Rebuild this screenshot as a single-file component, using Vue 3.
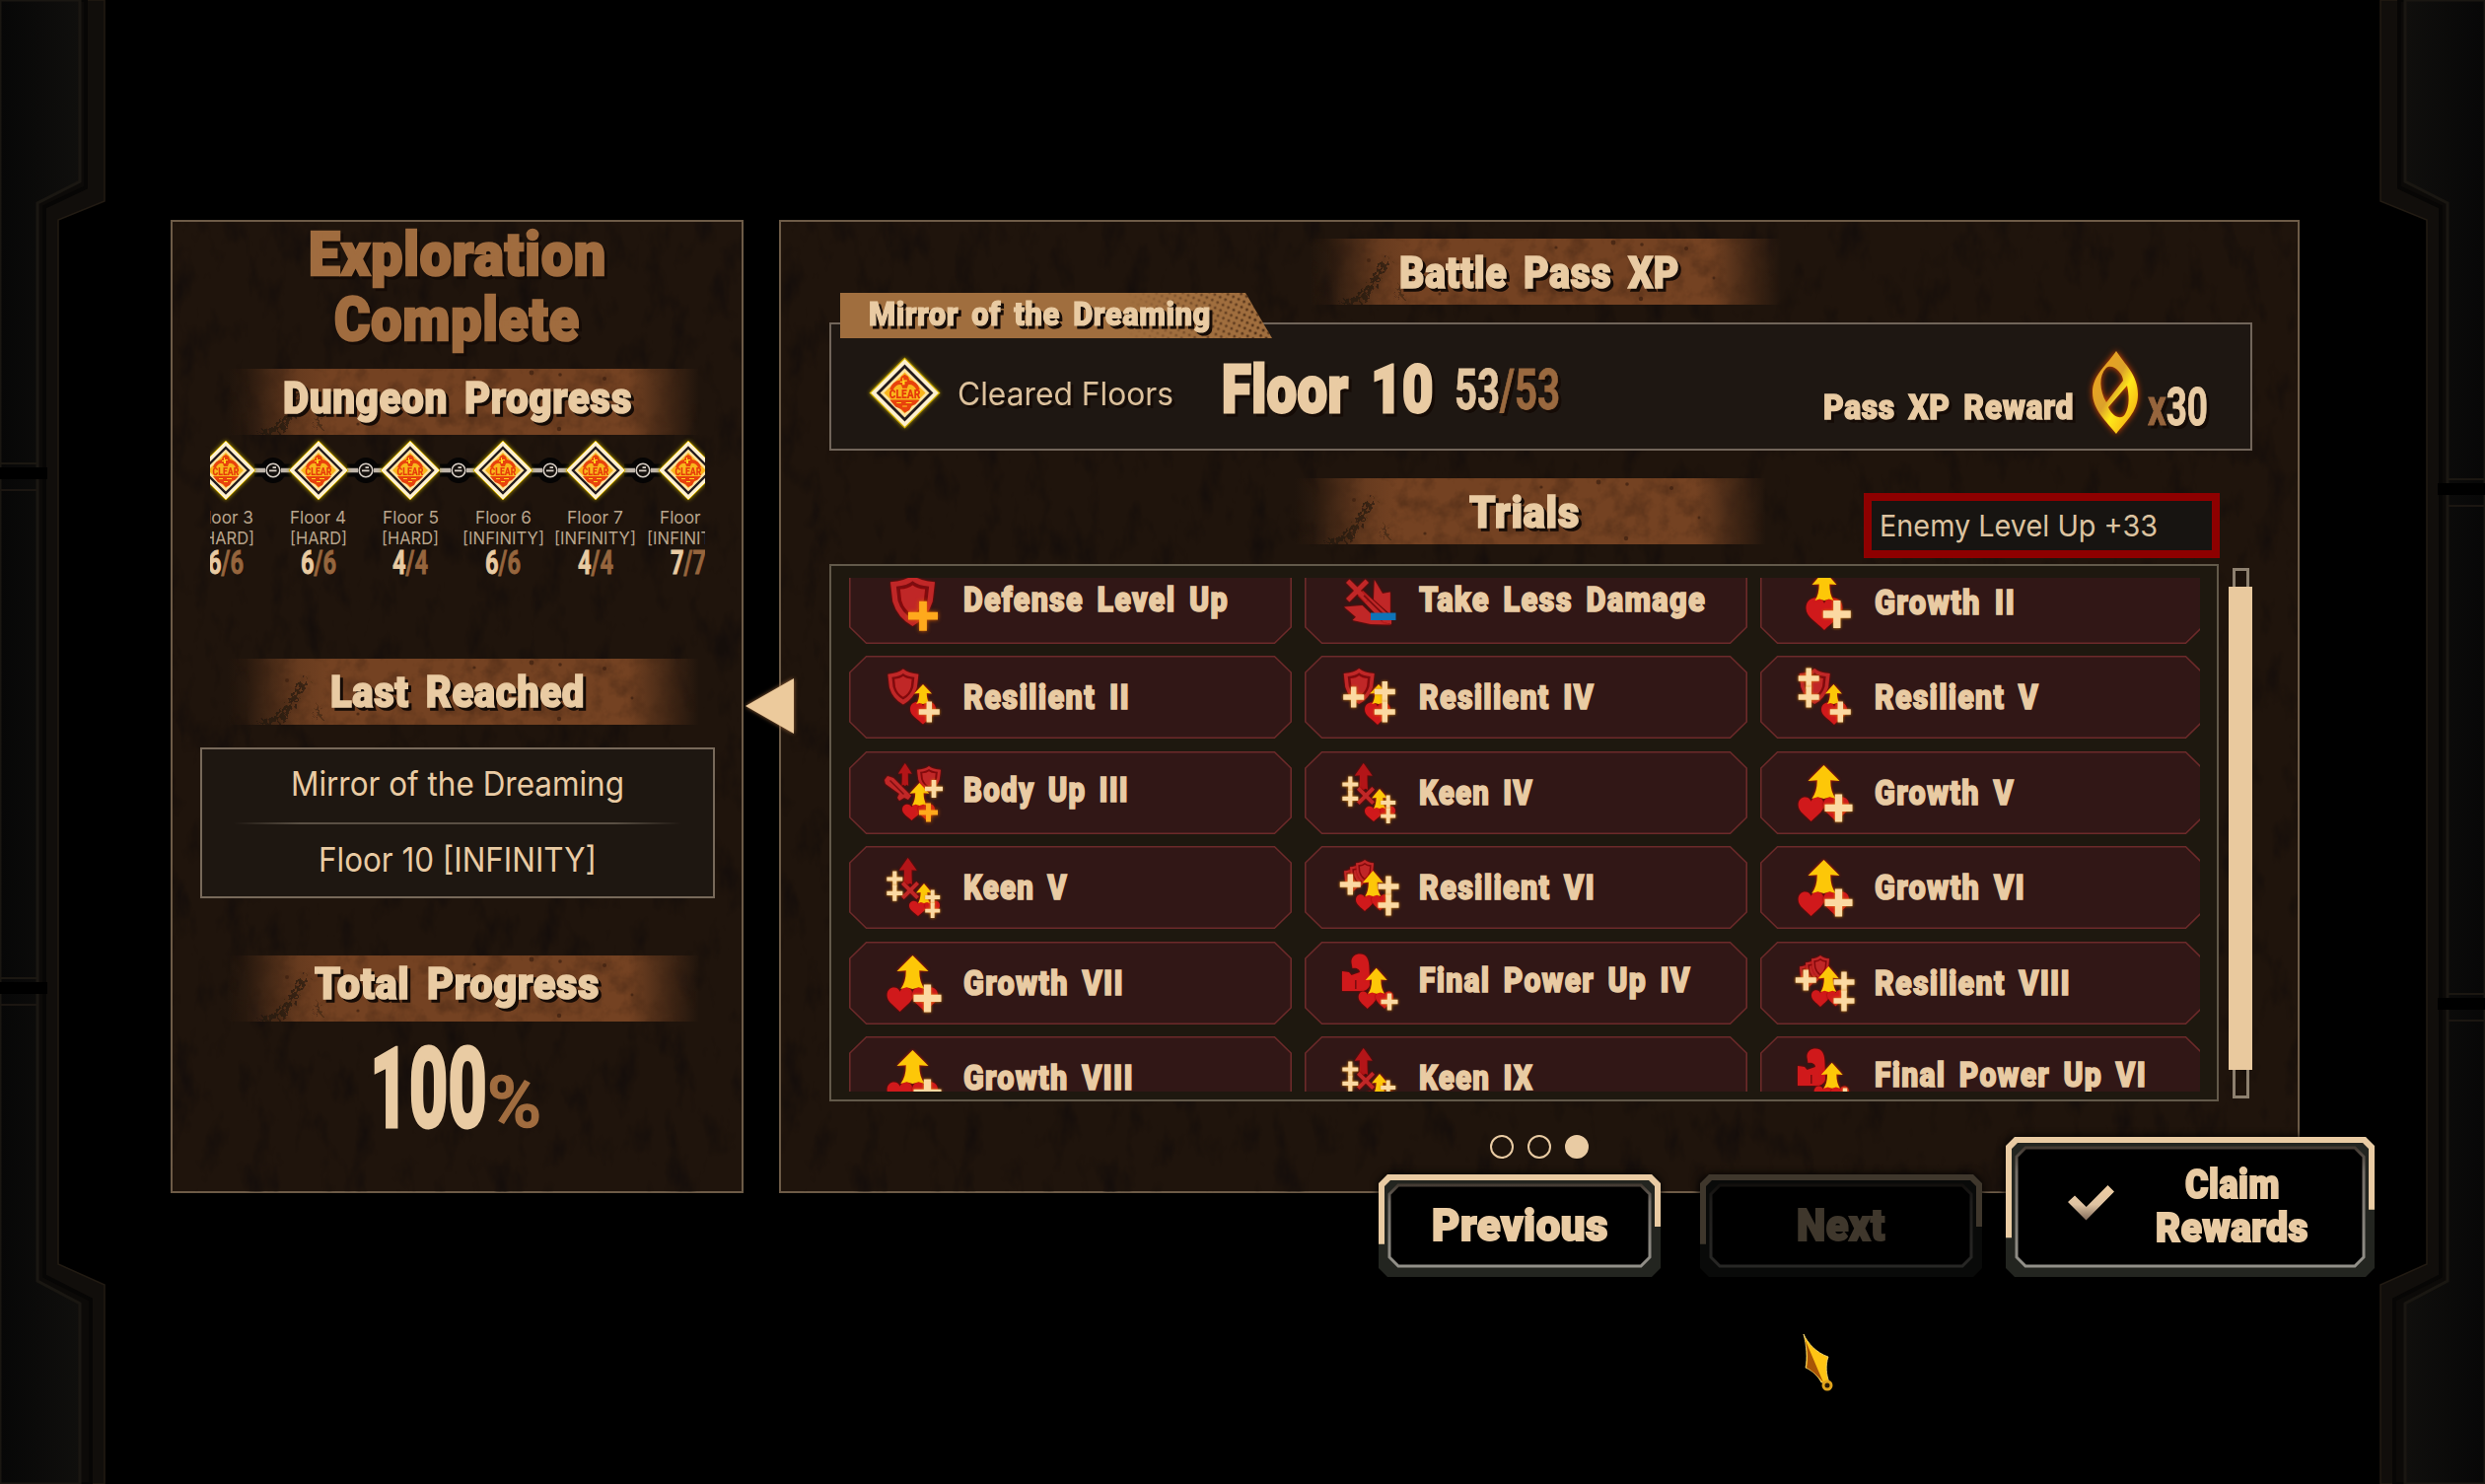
<script setup>
import { h } from 'vue'

const CREAM = '#e9cba3'
const BROWN = '#a06c3f'

/* Text set to an exact width; the box is as tall as the capitals. */
const Fit = (p) => {
  const body = p.face === 'body'
  const size = p.cap / (body ? 0.727 : 0.711)
  const parts = Array.isArray(p.t) ? p.t : [[p.t, p.color || CREAM]]
  return h('svg', { class: 'fit', width: p.w, height: p.cap }, [
    h('text', {
      x: 0, y: p.cap, textLength: p.w, lengthAdjust: 'spacingAndGlyphs',
      'font-family': body ? 'Inter, "Liberation Sans", sans-serif' : 'Roboto, "Liberation Sans", sans-serif',
      'font-size': size,
      'font-weight': p.weight || (body ? 400 : 900),
      'word-spacing': p.ws ?? (body ? 0 : size * 0.16),
      'letter-spacing': p.ls ?? (body ? 0 : 0.6),
      'stroke-linejoin': 'miter',
    }, parts.map(([s, c]) => h('tspan', { fill: c, stroke: c, 'stroke-width': p.stroke ?? (body ? 0 : 1.6) }, s))),
  ])
}
Fit.props = ['t', 'w', 'cap', 'face', 'color', 'weight', 'ws', 'ls', 'stroke']

const Banner = (_, { slots }) => h('div', { class: 'banner' }, [
  h('svg', { class: 'banner-bg', width: 478, height: 67, viewBox: '0 0 478 67' }, [
    h('rect', { width: 478, height: 67, fill: 'url(#bannerFill)' }),
    h('rect', { width: 478, height: 67, filter: 'url(#grain)', mask: 'url(#bannerMask)', opacity: 0.3 }),
    h('path', { d: 'M82 20 L70 30 L62 44 L48 58 L30 67 L46 67 L60 58 L66 46 L76 32 Z', fill: '#1d120b', opacity: 0.6, filter: 'url(#rough)' }),
    h('path', { d: 'M92 46 L86 62 L90 56 L96 62 Z', fill: '#1d120b', opacity: 0.4, filter: 'url(#rough)' }),
    ...[[308, 4, 2.4], [337, 6, 1.8], [382, 10, 2], [336, 61, 2.2], [250, 9, 1.6], [60, 22, 2], [410, 40, 1.4], [132, 56, 1.6]]
      .map(([cx, cy, r]) => h('circle', { cx, cy, r, fill: '#3c2010', opacity: 0.7 })),
  ]),
  h('div', { class: 'banner-text' }, slots.default()),
])

const plus = (cx, cy, r, c = 'cream') => {
  const t = r * 0.26
  return { k: 'plus', c, d: `M${cx - t} ${cy - r}h${2 * t}V${cy - t}H${cx + r}v${2 * t}H${cx + t}V${cy + r}h${-2 * t}V${cy + t}H${cx - r}v${-2 * t}H${cx - t}Z` }
}
const arrow = (cx, y, w, hh, c = 'gold') => {
  const a = w / 2, s = w * 0.21, n = y + hh * 0.47, b = y + hh, f = w * (c === 'gold' ? 0.38 : 0.24)
  return { k: 'arrow', c, d: `M${cx} ${y}L${cx + a} ${n}L${cx + s} ${n - hh * 0.02}Q${cx + s} ${y + hh * 0.8} ${cx + f} ${b}L${cx + f * 0.5} ${b - hh * 0.05}L${cx} ${b}L${cx - f * 0.5} ${b - hh * 0.05}L${cx - f} ${b}Q${cx - s} ${y + hh * 0.8} ${cx - s} ${n - hh * 0.02}L${cx - a} ${n}Z` }
}
const heart = (x, y, w, hh) => {
  const m = x + w / 2
  return { k: 'heart', c: 'red', d: `M${m} ${y + hh}C${m - w * 0.2} ${y + hh * 0.75} ${x} ${y + hh * 0.6} ${x} ${y + hh * 0.3}C${x} ${y - hh * 0.08} ${m - w * 0.08} ${y - hh * 0.12} ${m} ${y + hh * 0.16}C${m + w * 0.08} ${y - hh * 0.12} ${x + w} ${y - hh * 0.08} ${x + w} ${y + hh * 0.3}C${x + w} ${y + hh * 0.6} ${m + w * 0.2} ${y + hh * 0.75} ${m} ${y + hh}Z` }
}
const shieldPath = (x, y, w, hh) => {
  const m = x + w / 2
  return `M${m} ${y}Q${m + w * 0.16} ${y + hh * 0.12} ${x + w} ${y + hh * 0.14}L${x + w * 0.95} ${y + hh * 0.52}Q${x + w * 0.84} ${y + hh * 0.84} ${m} ${y + hh}Q${x + w * 0.16} ${y + hh * 0.84} ${x + w * 0.05} ${y + hh * 0.52}L${x} ${y + hh * 0.14}Q${m - w * 0.16} ${y + hh * 0.12} ${m} ${y}Z`
}
const shield = (x, y, w, hh) => [
  { c: 'rim', d: shieldPath(x, y, w, hh) },
  { c: 'dark', d: shieldPath(x + w * 0.13, y + hh * 0.12, w * 0.74, hh * 0.74) },
  { c: 'rim', d: shieldPath(x + w * 0.22, y + hh * 0.2, w * 0.56, hh * 0.58) },
]
const shields = () => [...shield(6, 18, 18, 24), ...shield(12, 14, 18, 24), ...shield(18, 10, 18, 24)]
const cross = (x, y, s) => ({ c: 'rim', d: `M${x - s} ${y - s * 0.7}l${s * 0.3} ${-s * 0.3}l${s * 0.7} ${s * 0.7}l${s * 0.7} ${-s * 0.7}l${s * 0.3} ${s * 0.3}l${-s * 0.7} ${s * 0.7}l${s * 0.7} ${s * 0.7}l${-s * 0.3} ${s * 0.3}l${-s * 0.7} ${-s * 0.7}l${-s * 0.7} ${s * 0.7}l${-s * 0.3} ${-s * 0.3}l${s * 0.7} ${-s * 0.7}Z` })

const resilientHigh = [...shields(), heart(18, 45.5, 18, 16.5), heart(34, 45.5, 17, 16), arrow(35.3, 21, 21, 26), plus(12.3, 35, 10.5), plus(51, 37, 10.5), plus(51, 56, 10.5)]
const growth = [heart(4.6, 43, 26, 24), heart(30, 43, 26, 24), arrow(30.5, 10, 32, 34), plus(45.5, 53.4, 14)]
const keen = [arrow(25.7, 8, 18, 27, 'deep'), cross(28, 41, 9), heart(27, 52, 18, 15), heart(43, 52, 15, 14), arrow(42, 34, 16, 20), plus(12.3, 29.5, 8), plus(12.3, 43.8, 8), plus(50.7, 48, 7.5), plus(50.7, 61.6, 7.5)]
const power = [
  { c: 'red', d: 'M13.500 17C13 11 18 8.500 22 8.500C29 8.500 31.500 14 31.500 24L32 40C30 46 25 46.500 20 46H4V26L11 27L13.500 30L22 27C22 24 18.500 22 14.500 23Z' },
  { c: 'dark', d: 'M17 35h1.6v9H17Z' },
  heart(20.7, 47, 18, 17), heart(38, 47, 18, 17), arrow(38.7, 22.8, 22, 26), plus(52, 57, 8.5),
]
const icons = {
  defense: [...shield(8, 10, 45, 52), plus(41, 51.7, 15, 'orange')],
  less: [
    { c: 'rim', d: 'M36.800 15L45 29L52.800 27.500V50L36 35Z' },
    { c: 'rim', d: 'M6 42.400L24.500 41L38 54L54 60.500L33 60L14.500 56L18 52.700Z' },
    { c: 'rim', d: 'M20 31L25 26L54 53V60L46 58Z' },
    cross(19.5, 26, 11.5),
    { c: 'dark', d: 'M25.500 31.500L26.700 30.300L49 52L47.800 53.200Z' },
    { c: 'blue', d: 'M33 48.500h25.500v7.5H33Z' },
  ],
  growth2: [heart(12.5, 34, 37, 32), arrow(31, 6, 25, 30), plus(43.8, 50, 14)],
  res2: [...shield(5.4, 9.6, 31, 36), heart(28, 43.6, 26, 22), arrow(41, 25, 18, 20), plus(47.3, 53, 10.5)],
  res4: [...shield(5.7, 9, 31, 36), heart(27, 44, 26, 22), arrow(41, 25, 18, 20), plus(15.7, 38, 10.5), plus(47.3, 32.4, 10.5), plus(47.3, 53, 10.5)],
  res5: [...shield(5.7, 9, 31, 36), heart(28, 44, 26, 22), arrow(40.4, 25, 17, 20), plus(15.2, 19, 10.5), plus(15.2, 38, 10.5), plus(47.3, 53, 10.5)],
  body: [arrow(22.8, 8, 14, 23, 'deep'), { c: 'rim', d: 'M2 25l3-4l6 2l18 18l-3 4l-4-2l-5 3l-2-3l2-4l-14-10Z' }, { c: 'dark', d: 'M7 26l1-1l14 14l-1 1Z' }, ...shield(35, 11, 24, 26), heart(20, 50, 19, 16), heart(36, 50, 17, 16), arrow(37.4, 28, 20, 23), plus(52, 34, 9), plus(46.5, 58, 9.5, 'orange')],
  keen, growth, power, resHigh: resilientHigh,
}

const trials = [
  ['Defense Level Up', 269, 'defense'], ['Take Less Damage', 291, 'less'], ['Growth II', 143, 'growth2'],
  ['Resilient II', 169, 'res2'], ['Resilient IV', 178, 'res4'], ['Resilient V', 167, 'res5'],
  ['Body Up III', 168, 'body'], ['Keen IV', 116, 'keen'], ['Growth V', 142, 'growth'],
  ['Keen V', 106, 'keen'], ['Resilient VI', 179, 'resHigh'], ['Growth VI', 153, 'growth'],
  ['Growth VII', 163, 'growth'], ['Final Power Up IV', 276, 'power'], ['Resilient VIII', 199, 'resHigh'],
  ['Growth VIII', 173, 'growth'], ['Keen IX', 116, 'keen'], ['Final Power Up VI', 276, 'power'],
].map(([name, w, icon]) => ({ name, w, icon, raised: / Up|Damage/.test(name) }))

const floors = [
  { n: 3, mode: 'HARD', c: '6' }, { n: 4, mode: 'HARD', c: '6' }, { n: 5, mode: 'HARD', c: '4' },
  { n: 6, mode: 'INFINITY', c: '6' }, { n: 7, mode: 'INFINITY', c: '4' }, { n: 8, mode: 'INFINITY', c: '7' },
]

const ClearMark = (p) => h('svg', { class: 'clear', width: p.size, height: p.size, viewBox: '-32 -32 64 64' }, [
  h('path', { d: 'M0-30L30 0L0 30L-30 0Z', fill: '#fdf0d0', stroke: '#d8b400', 'stroke-width': 1 }),
  h('path', { d: 'M0-23L23 0L0 23L-23 0Z', fill: '#ffe3a0', stroke: '#221a1c', 'stroke-width': 2.4 }),
  h('path', { d: 'M0-18L18 0L0 18L-18 0Z', fill: '#f9b51c' }),
  h('path', { d: 'M-13-3Q-11-10-4-11L-3-14L0-16L3-14L4-11Q11-10 13-3L10-3Q7-8 3-7L2-4H-2L-3-7Q-7-8-10-3ZM-13 6H13L9 10L6 11L4 15L0 17L-3 14L-8 12Z', fill: '#e8420c' }),
  h('path', { d: 'M-2-13h1v2h3v1h-2v3h-2v-2h-2v-1h2ZM-7 8h4v1h-4ZM1 8h5v1h-5ZM-2 11h4v1h-4Z', fill: '#ffd21f' }),
  h('text', { x: -13.5, y: 4.6, textLength: 27, lengthAdjust: 'spacingAndGlyphs', 'font-family': 'Roboto, sans-serif', 'font-weight': 900, 'font-size': 11.5, fill: '#e63a0a' }, 'CLEAR'),
])
ClearMark.props = ['size']

const Frame = (p) => {
  const { w, ht: H } = p
  const shape = (i, b = 0) => `M${9 + i} ${i}H${w - 9 - i}L${w - i} ${9 + i}V${H - 9 - i - b}L${w - 9 - i} ${H - i - b}H${9 + i}L${i} ${H - 9 - i - b}V${9 + i}Z`
  const l = H * p.left, r = H * p.right
  return h('svg', { class: 'frame', width: w, height: H }, [
    h('path', { d: shape(0), fill: '#232520' }),
    h('path', { d: `M0 ${l}V9L9 0H${w - 9}L${w} 9V${r}H${w - 6}V12L${w - 12} 6H12L6 12V${l}Z`, fill: CREAM }),
    h('path', { d: shape(11), fill: '#000', stroke: 'url(#frameStroke)', 'stroke-width': 3 }),
  ])
}
Frame.props = ['w', 'ht', 'left', 'right']

const railOuter = 'M0 0H106V204L59 223V1282L106 1303V1505H0Z'
const railMid = 'M0 0H87V190L45 210V1294L92 1318V1505H0Z'
const railInner = 'M0 0H81V184L38 206V1299L81 1322V1505H0Z'
</script>

<template>
  <main class="stage">
    <svg class="scenery" width="2520" height="1505">
      <defs>
        <linearGradient id="railFill" x1="0" x2="1" y1="0" y2="0"><stop offset="0" stop-color="#070707" /><stop offset="1" stop-color="#100f0d" /></linearGradient>
        <linearGradient id="bannerFill"><stop offset="0" stop-color="#744222" stop-opacity="0" /><stop offset=".04" stop-color="#744222" stop-opacity=".12" /><stop offset=".15" stop-color="#744222" stop-opacity=".85" /><stop offset=".22" stop-color="#744222" /><stop offset=".85" stop-color="#744222" /><stop offset=".93" stop-color="#744222" stop-opacity=".45" /><stop offset="1" stop-color="#744222" stop-opacity="0" /></linearGradient>
        <linearGradient id="maskFade"><stop offset="0" stop-color="#000" /><stop offset=".16" stop-color="#fff" /><stop offset=".84" stop-color="#fff" /><stop offset="1" stop-color="#000" /></linearGradient>
        <mask id="bannerMask"><rect width="478" height="67" fill="url(#maskFade)" /></mask>
        <linearGradient id="frameStroke" x1="0" x2="0" y1="0" y2="1"><stop offset="0" stop-color="#443b33" /><stop offset=".2" stop-color="#736d66" /><stop offset="1" stop-color="#929089" /></linearGradient>
        <linearGradient id="eyeFill" x1="0" x2="1" y1="0" y2="1"><stop offset="0" stop-color="#f0a21c" /><stop offset=".45" stop-color="#dca22a" /><stop offset=".6" stop-color="#ffe81a" /><stop offset="1" stop-color="#f09a10" /></linearGradient>
        <linearGradient id="checkFill" x1="0" x2="0" y1="0" y2="1"><stop offset="0" stop-color="#f0cfa4" /><stop offset=".55" stop-color="#dfc3a2" /><stop offset="1" stop-color="#806a5a" /></linearGradient>
        <filter id="grain" x="0" y="0" width="100%" height="100%" color-interpolation-filters="sRGB"><feTurbulence type="fractalNoise" baseFrequency=".05" numOctaves="4" seed="7" /><feColorMatrix values="0 0 0 0 .12  0 0 0 0 .06  0 0 0 0 .03  0 0 0 2.2 -.95" /></filter>
        <filter id="panelGrain" x="0" y="0" width="100%" height="100%" color-interpolation-filters="sRGB"><feTurbulence type="fractalNoise" baseFrequency=".04 .02" numOctaves="4" seed="3" /><feColorMatrix values="0 0 0 0 .05  0 0 0 0 .035  0 0 0 0 .04  0 0 0 3 -1.6" /></filter>
        <filter id="rough" x="-20%" y="-20%" width="140%" height="140%"><feTurbulence type="fractalNoise" baseFrequency=".25" numOctaves="2" /><feDisplacementMap in="SourceGraphic" scale="14" /></filter>
        <pattern id="halftone" width="6" height="6" patternUnits="userSpaceOnUse" patternTransform="rotate(25)"><circle cx="3" cy="3" r="1.5" fill="#4a2b14" /></pattern>
        <linearGradient id="halftoneFade"><stop offset=".66" stop-color="#000" /><stop offset="1" stop-color="#fff" /></linearGradient>
        <mask id="tabMask"><rect width="438" height="46" fill="url(#halftoneFade)" /></mask>
      </defs>
      <g v-for="side in 2" :key="side" :transform="side === 1 ? '' : 'translate(2520 0) scale(-1 1)'">
        <path :d="railOuter" fill="#110e0b" stroke="#221b13" stroke-width="1.5" />
        <path :d="railMid" fill="#0c0a08" stroke="#070605" stroke-width="4" />
        <path :d="railInner" fill="url(#railFill)" stroke="#1a1712" stroke-width="3" />
        <g v-for="y in side === 1 ? [470, 992] : [486, 1008]" :key="y">
          <path :d="`M0 ${y}H38`" stroke="#1b1711" stroke-width="2" />
          <path :d="`M0 ${y + 10}H48`" stroke="#000" stroke-width="12" />
          <path :d="`M0 ${y + 27}H38`" stroke="#1b1611" stroke-width="2" />
        </g>
      </g>
    </svg>

    <section class="panel side">
      <svg class="grain" width="577" height="984"><rect width="577" height="984" filter="url(#panelGrain)" /></svg>
      <div class="title sh">
        <Fit t="Exploration" :w="302" :cap="43" :color="BROWN" :ls="1" :stroke="2.6" />
        <Fit t="Complete" :w="249" :cap="43" :color="BROWN" :ls="1" :stroke="2.6" />
      </div>
      <Banner class="low"><Fit t="Dungeon Progress" :w="354" :cap="32" /></Banner>
      <div class="floors">
        <div v-for="(f, i) in floors" :key="f.n" class="floor">
          <ClearMark :size="64" />
          <svg v-if="i < floors.length - 1" class="link" width="38" height="28" viewBox="-19 -14 38 28">
            <path d="M-19 0H19" stroke="#050404" stroke-width="13" />
            <circle r="13" fill="#050404" />
            <path d="M-19 0H-8M8 0H19" stroke="#bdb3a8" stroke-width="4.5" />
            <circle r="6.8" fill="#14100d" stroke="#d8cfc6" stroke-width="1.6" />
            <path d="M-4 .3H3.500M-.5-2.800H3" stroke="#d8cfc6" stroke-width="1.7" />
          </svg>
          <div class="floor-text">
            <Fit face="body" :t="`Floor ${f.n}`" :w="57" :cap="12.5" color="#b9a58c" />
            <Fit face="body" :t="`[${f.mode}]`" :w="f.mode === 'HARD' ? 58 : 83" :cap="12.5" color="#b9a58c" />
            <Fit :t="[[f.c, CREAM], [`/${f.c}`, '#96653d']]" :w="36" :cap="24" :weight="700" :stroke="0.8" :ls="0" />
          </div>
        </div>
      </div>
      <Banner><Fit t="Last Reached" :w="258" :cap="31" /></Banner>
      <div class="reached">
        <Fit face="body" t="Mirror of the Dreaming" :w="338" :cap="24.5" />
        <hr />
        <Fit face="body" t="Floor 10 [INFINITY]" :w="282" :cap="24.5" />
      </div>
      <Banner class="low"><Fit t="Total Progress" :w="289" :cap="31" /></Banner>
      <div class="total">
        <Fit t="100" :w="119" :cap="80" :weight="800" :stroke="3" :ls="0" />
        <Fit t="%" :w="55" :cap="52" :weight="500" color="#a06c3f" :stroke="1.6" :ls="0" />
      </div>
    </section>

    <svg class="pointer" width="60" height="70" viewBox="0 0 60 70"><path d="M5 35L54 7V63Z" fill="#ecca9c" /></svg>

    <section class="panel main">
      <svg class="grain" width="1538" height="984"><rect width="1538" height="984" filter="url(#panelGrain)" /></svg>
      <Banner class="xp"><Fit t="Battle Pass XP" :w="284" :cap="31.5" /></Banner>
      <div class="pass">
        <div class="tab">
          <svg class="tab-bg" width="438" height="46"><path d="M0 0H411L438 46H0Z" fill="#a06e3e" /><path d="M0 0H411L438 46H0Z" fill="url(#halftone)" mask="url(#tabMask)" /></svg>
          <Fit class="sh" t="Mirror of the Dreaming" :w="347" :cap="24" :stroke="1.2" />
        </div>
        <ClearMark :size="75" />
        <Fit class="cleared sh" face="body" t="Cleared Floors" :w="219" :cap="24" color="#dcc19c" />
        <Fit class="floor-no sh" t="Floor 10" :w="215" :cap="47" :stroke="2.8" />
        <Fit class="count sh" :t="[['53', '#e3c6a0'], ['/53', '#9a693f']]" :w="107" :cap="41" :weight="700" :stroke="0.8" :ls="0" />
        <Fit class="reward sh" t="Pass XP Reward" :w="254" :cap="25.5" :stroke="1.4" />
        <svg class="eye" width="52" height="88" viewBox="0 0 52 88">
          <path fill-rule="evenodd" fill="url(#eyeFill)" d="M27 2C36 16 49 26 49 46C49 64 36 74 27 86C18 74 3 62 3 44C3 26 18 16 27 2ZM17 19C9 27 10 42 17 54L34 32C34 24 23 14 17 19ZM38 37L19 59C23 68 32 73 36 66C41 58 40 46 38 37Z" />
        </svg>
        <Fit class="times sh" :t="[['x', '#96653d'], ['30', CREAM]]" :w="61" :cap="38" :weight="700" :stroke="1" :ls="0" />
      </div>
      <div class="trials-head">
        <Banner><Fit t="Trials" :w="112" :cap="31.5" /></Banner>
        <div class="enemy"><Fit face="body" t="Enemy Level Up +33" :w="282" :cap="22" color="#dcc3a0" /></div>
      </div>
      <div class="trials-row">
        <div class="trials">
          <div class="clip">
            <div class="grid">
              <div v-for="t in trials" :key="t.name" class="card">
                <svg class="card-bg" width="449" height="84"><path d="M17.500 .8H431.500L448.200 17V67L431.500 83.200H17.500L.8 67V17Z" fill="#311716" stroke="#6c2a2a" stroke-width="1.6" /></svg>
                <svg class="icon" width="64" height="76" viewBox="0 0 64 76"><path v-for="(s, i) in icons[t.icon]" :key="i" :class="s.c" :d="s.d" /></svg>
                <Fit :class="['name', { raised: t.raised }]" :t="t.name" :w="t.w" :cap="24.5" :ls="1.4" :stroke="1.5" />
              </div>
            </div>
          </div>
        </div>
        <div class="track"><div class="thumb"></div></div>
      </div>
      <div class="dots"><i></i><i></i><i class="on"></i></div>
    </section>

    <nav class="actions">
      <div class="btn prev"><Frame :w="286" :ht="104" :left="0.68" :right="0.51" /><Fit t="Previous" :w="179" :cap="32" :stroke="2" /></div>
      <div class="btn prev off"><Frame :w="286" :ht="104" :left="0.68" :right="0.51" /><Fit t="Next" :w="90" :cap="32" :stroke="2" /></div>
      <div class="btn claim">
        <Frame :w="374" :ht="142" :left="0.72" :right="0.52" />
        <svg class="check" width="48" height="36"><path d="M0 17L7 10.500L18.700 22L40.500 0L47 6.500L18.500 35.500Z" fill="url(#checkFill)" /></svg>
        <div class="claim-text"><Fit t="Claim" :w="96" :cap="29" :stroke="2" /><Fit t="Rewards" :w="155" :cap="28.5" :stroke="2" /></div>
      </div>
    </nav>

    <svg class="cursor" width="32" height="62" viewBox="0 0 32 62">
      <path d="M2 1C6 10 15 20 27 24C24 33 25 42 28 50L20 50C17 44 11 38 4 35C6 26 5 12 2 1Z" fill="#ffc414" stroke="#ffe07a" stroke-width=".8" />
      <path d="M2 3L22 50C17 44 11 38 5 35C7 26 6 12 2 3Z" fill="#a85406" />
      <circle cx="26" cy="53" r="4" fill="#2b1a04" stroke="#e0a41c" stroke-width="3" />
    </svg>
  </main>
</template>

<style>
html, body { margin: 0; background: #000; }
</style>

<style scoped>
.stage { position: relative; width: 2520px; height: 1505px; box-sizing: border-box; padding: 223px 0 0 173px; display: flex; align-items: flex-start; gap: 36px; background: #000; overflow: hidden; }
.stage :deep(svg) { display: block; flex: none; }
.stage :deep(.fit) { overflow: visible; }
.scenery { position: absolute; inset: 0; }
.sh, :deep(.banner-text) { filter: drop-shadow(3px 3px 0 #150b06); }
.panel { position: relative; box-sizing: border-box; height: 987px; border: 2px solid #6d5b47; background: #1f140c; display: flex; flex-direction: column; align-items: center; flex: none; }
.grain { position: absolute; left: 0; top: 0; opacity: .5; }
.panel > :not(.grain) { position: relative; }
.side { width: 581px; }
.main { width: 1542px; align-items: stretch; }
.title { display: flex; flex-direction: column; align-items: center; gap: 23px; margin: 11px 0 29px; }
:deep(.banner) { position: relative; height: 67px; width: 478px; flex: none; display: flex; justify-content: center; align-items: flex-start; }
:deep(.banner-bg) { position: absolute; left: 6px; top: 0; }
:deep(.banner-text) { position: relative; margin-top: 17.5px; }
.low :deep(.banner-text) { margin-top: 13px; }
.low.banner :deep(.banner-text) { margin-top: 13px; }

.floors { width: 502px; height: 227px; overflow: hidden; display: flex; flex: none; box-sizing: border-box; padding-top: 4px; }
.floor { position: relative; flex: none; width: 93.75px; display: flex; flex-direction: column; align-items: center; }
.floor:first-child { margin-left: -30.5px; }
.clear { filter: drop-shadow(0 0 2px #a99300); overflow: visible; position: relative; z-index: 1; }
.link { position: absolute; left: 76px; top: 18px; }
.floor-text { display: flex; flex-direction: column; align-items: center; margin-top: 8.500px; gap: 9px; }
.floor-text > :last-child { margin-top: -3px; }

.reached { box-sizing: border-box; width: 522px; height: 153px; margin: 23px 0 58px; border: 2px solid #77695a; background: #1e1711; display: flex; flex-direction: column; align-items: center; padding-top: 22px; flex: none; }
.reached hr { border: 0; width: 454px; height: 2px; margin: 27px 0 23px; background: linear-gradient(90deg, transparent, #5a5044 15%, #5a5044 85%, transparent); }
.total { display: flex; align-items: flex-end; gap: 0; margin: 27px 4px 0 0; }

.pointer { position: absolute; left: 751px; top: 681px; z-index: 2; filter: drop-shadow(0 0 2px #a06c3f); }

.xp { align-self: center; margin-top: 17px; }
.pass { position: relative; box-sizing: border-box; width: 1443px; height: 130px; margin: 18px 0 0 49px; border: 2px solid #71655a; background: #1e1712; display: flex; align-items: flex-start; padding: 32px 0 0 37px; flex: none; }
.tab { position: absolute; left: 9px; top: -32px; width: 438px; height: 46px; box-sizing: border-box; padding: 9px 0 0 29px; }
.tab-bg { position: absolute; left: 0; top: 0; }
.cleared { margin: 26px 0 0 16px; }
.floor-no { margin: 10px 0 0 49px; }
.count { margin: 13px 0 0 21px; }
.reward { margin: 38px 0 0 267px; }
.eye { margin: -7px 0 0 16px; filter: drop-shadow(0 0 3px #e84a00); }
.times { margin: 32px 0 0 7px; }
.trials-head { display: flex; align-items: flex-start; height: 81px; margin: 28px 0 6px; padding-left: 515px; }
.enemy { box-sizing: border-box; width: 361px; height: 66px; margin: 14.500px 0 0 105px; border: 8.5px solid #8e0000; background: #171411; padding: 14px 0 0 8px; }

.trials-row { display: flex; gap: 10px; padding-left: 49px; }
.trials { box-sizing: border-box; width: 1409px; height: 545px; border: 2px solid #62594a; background: #1e180f; padding: 11.500px 0 0 18px; flex: none; }
.clip { width: 1370px; height: 521px; overflow: hidden; }
.grid { display: grid; grid-template-columns: repeat(3, 448.500px); grid-auto-rows: 83.500px; gap: 13px 13.500px; margin-top: -16.700px; width: 1373px; }
.card { position: relative; display: flex; align-items: flex-start; }
.card-bg { position: absolute; left: 0; top: 0; }
.icon { position: relative; margin: 4px 18px 0 34px; overflow: visible; }
.name { position: relative; margin-top: 28.700px; }
.name.raised { margin-top: 26px; }
.cream { fill: #fbd9a2; filter: drop-shadow(0 0 1.500px #e08a10); }
.orange { fill: #ffa91c; filter: drop-shadow(0 0 2px #e06000); }
.gold { fill: #fdc708; filter: drop-shadow(0 0 1.500px #e01800); }
.red { fill: #d0191b; filter: drop-shadow(0 0 1px #8a0000); }
.deep { fill: #b31518; filter: drop-shadow(0 0 1px #8a0000); }
.rim { fill: #c02727; filter: drop-shadow(0 0 1px #a00000); }
.dark { fill: #7c0d10; }
.blue { fill: #0f74b8; }

.track { box-sizing: border-box; width: 24px; height: 538px; margin-top: 4px; display: flex; justify-content: center; padding: 19px 0 29px; background: linear-gradient(#8d806f, #8d806f) 3.500px 0 / 3px 100% no-repeat, linear-gradient(#8d806f, #8d806f) 17.500px 0 / 3px 100% no-repeat, linear-gradient(#8d806f, #8d806f) center top / 16px 3px no-repeat, linear-gradient(#8d806f, #8d806f) center bottom / 16px 3px no-repeat; }
.thumb { width: 24px; background: #e9c99e; }
.dots { display: flex; gap: 14px; justify-content: center; margin-top: 34px; }
.dots i { box-sizing: border-box; width: 24px; height: 24px; border: 2px solid #e9cba3; border-radius: 50%; }
.dots .on { background: #e9cba3; }

.actions { position: absolute; left: 1398px; top: 1153px; display: flex; align-items: flex-end; z-index: 3; }
.btn { position: relative; display: flex; filter: drop-shadow(0 0 4px #000); }
.btn :deep(.frame) { position: absolute; left: 0; top: 0; }
.btn > :not(.frame) { position: relative; }
.prev { box-sizing: border-box; width: 286px; height: 104px; justify-content: center; padding-top: 34.500px; margin-right: 40px; }
.off { margin-right: 24px; }
.off > * { filter: brightness(.27); }
.claim { width: 374px; height: 142px; }
.check { margin: 49px 0 0 63px; }
.claim-text { display: flex; flex-direction: column; align-items: center; gap: 15px; margin: 33px 0 0 41px; }
.cursor { position: absolute; left: 1827px; top: 1352px; }
</style>
